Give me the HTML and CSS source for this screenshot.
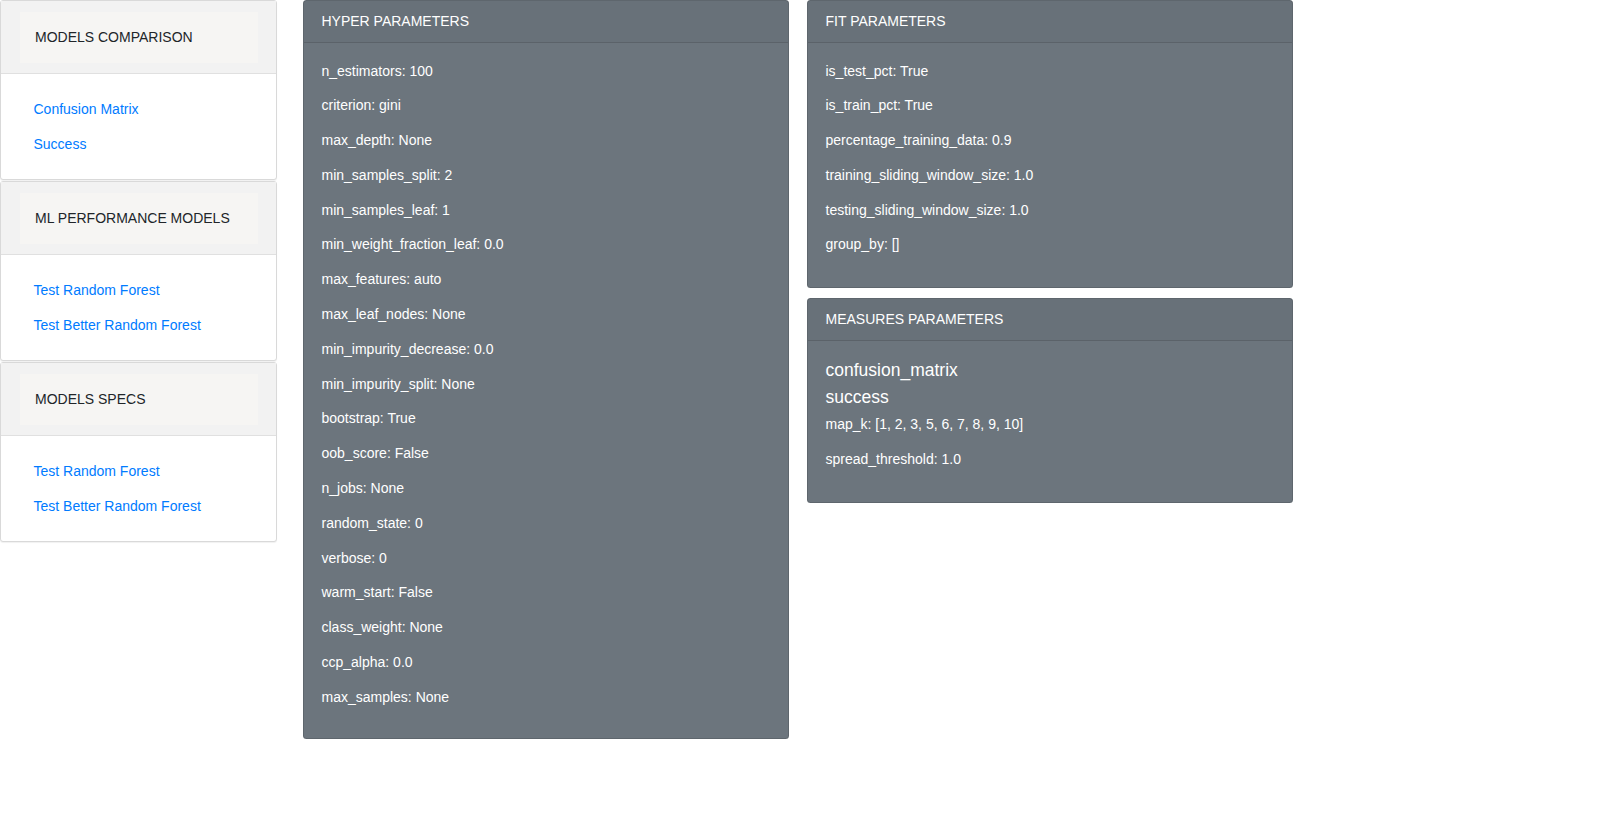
FILE: index.html
```html
<!DOCTYPE html>
<html lang="en">
<head>
<meta charset="utf-8">
<title>Models</title>
<link rel="stylesheet" href="styles.css">
</head>
<body>
<div class="page">
  <aside class="sidebar">
    <section class="side-card">
      <div class="side-header"><div class="side-title">MODELS COMPARISON</div></div>
      <div class="side-body">
        <a class="side-link" href="#">Confusion Matrix</a>
        <a class="side-link" href="#">Success</a>
      </div>
    </section>
    <section class="side-card">
      <div class="side-header"><div class="side-title">ML PERFORMANCE MODELS</div></div>
      <div class="side-body">
        <a class="side-link" href="#">Test Random Forest</a>
        <a class="side-link" href="#">Test Better Random Forest</a>
      </div>
    </section>
    <section class="side-card">
      <div class="side-header"><div class="side-title">MODELS SPECS</div></div>
      <div class="side-body">
        <a class="side-link" href="#">Test Random Forest</a>
        <a class="side-link" href="#">Test Better Random Forest</a>
      </div>
    </section>
  </aside>

  <div class="col">
    <section class="card">
      <div class="card-header">HYPER PARAMETERS</div>
      <div class="card-body card-body-hyper">
        <p class="param">n_estimators: 100</p>
        <p class="param">criterion: gini</p>
        <p class="param">max_depth: None</p>
        <p class="param">min_samples_split: 2</p>
        <p class="param">min_samples_leaf: 1</p>
        <p class="param">min_weight_fraction_leaf: 0.0</p>
        <p class="param">max_features: auto</p>
        <p class="param">max_leaf_nodes: None</p>
        <p class="param">min_impurity_decrease: 0.0</p>
        <p class="param">min_impurity_split: None</p>
        <p class="param">bootstrap: True</p>
        <p class="param">oob_score: False</p>
        <p class="param">n_jobs: None</p>
        <p class="param">random_state: 0</p>
        <p class="param">verbose: 0</p>
        <p class="param">warm_start: False</p>
        <p class="param">class_weight: None</p>
        <p class="param">ccp_alpha: 0.0</p>
        <p class="param">max_samples: None</p>
      </div>
    </section>
  </div>

  <div class="col">
    <section class="card">
      <div class="card-header">FIT PARAMETERS</div>
      <div class="card-body">
        <p class="param">is_test_pct: True</p>
        <p class="param">is_train_pct: True</p>
        <p class="param">percentage_training_data: 0.9</p>
        <p class="param">training_sliding_window_size: 1.0</p>
        <p class="param">testing_sliding_window_size: 1.0</p>
        <p class="param">group_by: []</p>
      </div>
    </section>
    <section class="card card-spaced">
      <div class="card-header">MEASURES PARAMETERS</div>
      <div class="card-body card-body-measures">
        <h5 class="measure">confusion_matrix</h5>
        <h5 class="measure">success</h5>
        <p class="param">map_k: [1, 2, 3, 5, 6, 7, 8, 9, 10]</p>
        <p class="param">spread_threshold: 1.0</p>
      </div>
    </section>
  </div>
</div>
</body>
</html>
```

FILE: styles.css
```css
* {
  box-sizing: border-box;
}

body {
  margin: 0;
  background: #ffffff;
  font-family: "Liberation Sans", Arial, Helvetica, sans-serif;
  font-size: 14px;
  line-height: 21px;
  color: #212529;
}

.page {
  display: flex;
  align-items: flex-start;
}

/* Sidebar */
.sidebar {
  width: 277px;
  flex: none;
  margin-right: 26px;
}

.side-card {
  background: #ffffff;
  border: 1px solid #d9d9d9;
  border-radius: 3px;
  box-shadow: 0 1px 1px rgba(0, 0, 0, 0.06);
  margin-bottom: 1px;
}

.side-header {
  background: #f2f2f2;
  border-bottom: 1px solid #e0e0e0;
  padding: 11px 18px 10px 19px;
}

.side-title {
  background: #f6f5f3;
  height: 51px;
  line-height: 51px;
  padding: 0 15px;
  font-size: 14px;
  color: #212529;
}

.side-body {
  padding: 25px 0 24px 32.5px;
}

.side-link {
  display: block;
  color: #007bff;
  text-decoration: none;
  line-height: 21px;
  margin-bottom: 14px;
}

.side-link:last-child {
  margin-bottom: 0;
}

/* Main columns */
.col {
  width: 486px;
  flex: none;
}

.col + .col {
  margin-left: 18px;
}

.card {
  background: #6c757d;
  color: #ffffff;
  border: 1px solid rgba(0, 0, 0, 0.125);
  border-radius: 3.5px;
}

.card-spaced {
  margin-top: 10.5px;
}

.card-header {
  background: rgba(0, 0, 0, 0.03);
  border-bottom: 1px solid rgba(0, 0, 0, 0.125);
  padding: 10px 17.5px;
  line-height: 21px;
  font-size: 14px;
}

.card-body {
  padding: 17.5px 17.5px 17.5px;
}

.card-body-hyper {
  padding-bottom: 16.5px;
}

.card-body-measures {
  padding-top: 18.5px;
}

.param {
  margin: 0 0 13.8px;
  line-height: 21px;
}

.card-body-measures .param {
  margin-bottom: 14.5px;
}

.measure {
  margin: 0 0 6px;
  font-size: 17.5px;
  font-weight: 400;
  line-height: 21px;
}
```
